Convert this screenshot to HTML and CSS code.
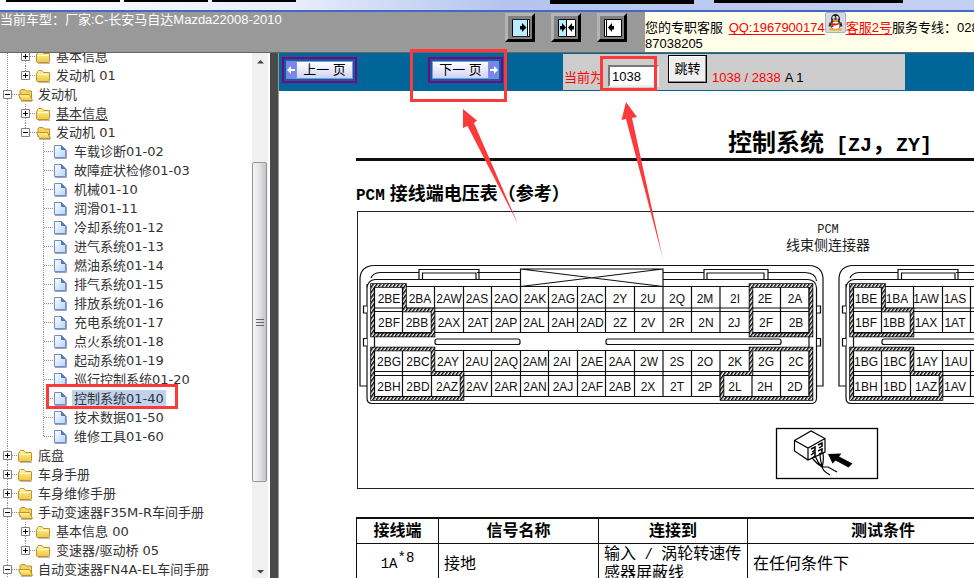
FILE: index.html
```html
<!DOCTYPE html>
<html lang="zh-CN">
<head>
<meta charset="utf-8">
<title>车型手册</title>
<link rel="stylesheet" href="styles.css">
</head>
<body>
<svg class="defs" aria-hidden="true">
  <defs>
    <linearGradient id="gold" x1="0" y1="0" x2="0" y2="1"><stop offset="0" stop-color="#fff6a8"/><stop offset="1" stop-color="#efc83c"/></linearGradient>
    <linearGradient id="paper" x1="0" y1="0" x2="1" y2="1"><stop offset="0" stop-color="#fff"/><stop offset="1" stop-color="#b5d4ff"/></linearGradient>
    <symbol id="closed" viewBox="0 0 15 14">
      <path d="M1 4.5 1.5 2.5 2.5 1.5H6L7.500 3.500H13Q13.500 3.500 13.500 4V11.500Q13.500 12.500 12.500 12.500H1.500Q.5 12.500.5 11.500V4.500Z" fill="url(#gold)" stroke="#c0922c"/>
      <path d="M1.500 5.500H12.500" stroke="#fffbd0"/><path d="M2 13.500H14" stroke="#bbb"/>
    </symbol>
    <symbol id="open" viewBox="0 0 15 14">
      <path d="M2 11V3L3 1.500H7L8.500 3H13.500V11" fill="#f3d560" stroke="#c0922c"/>
      <path d="M.5 6.500H11.500L14.500 12.500H3.500Z" fill="url(#gold)" stroke="#c0922c"/><path d="M3 13.500H14" stroke="#bbb"/>
    </symbol>
    <symbol id="doc" viewBox="0 0 15 14">
      <path d="M.5.5H7.500L11.500 4.500V12.500H.5Z" fill="url(#paper)" stroke="#6f8fca"/>
      <path d="M7.500.5V4.500H11.500" fill="#5a80c8" stroke="#5570b0"/><path d="M1 13.500H12.500V5" fill="none" stroke="#a0a0b8"/>
    </symbol>
    <symbol id="plus" viewBox="0 0 9 9"><path d="M.5.5H8.500V8.500H.5Z" fill="#fff" stroke="#808080"/><path d="M2 4.500H7M4.500 2V7" stroke="#000"/></symbol>
    <symbol id="minus" viewBox="0 0 9 9"><path d="M.5.5H8.500V8.500H.5Z" fill="#fff" stroke="#808080"/><path d="M2 4.500H7" stroke="#000"/></symbol>
    <pattern id="hatch" width="3" height="3" patternUnits="userSpaceOnUse" patternTransform="rotate(35)"><rect width="3" height="3" fill="#fff"/><rect width="1.500" height="3" fill="#000"/></pattern>
  </defs>
</svg>

<div class="strip"><span class="tab t1"></span><span class="tab t2"></span><span class="tab t3"></span><span class="tab t4"></span><span class="tab t5"></span></div>

<header class="header">
  <div class="model">当前车型：厂家:C-长安马自达Mazda22008-2010</div>
  <div class="frames">
    <button class="frame-btn" aria-label="展开左栏"><svg width="18" height="18" viewBox="0 0 18 18"><path d="M0 0H18V18H0Z" fill="#fff"/><path d="M.5.5H15.500V17.500H.5Z" fill="#b8ecff" stroke="#000"/><path d="M17.500 0V18M0 .5H18M0 17.500H18" stroke="#222"/><path d="M8 7H10V4L14.500 8.500 10 13V10.500H8Z"/></svg></button>
    <button class="frame-btn" aria-label="双栏"><svg width="18" height="18" viewBox="0 0 18 18"><path d="M.5.5H8.500V17.500H.5Z" fill="#b8ecff" stroke="#000"/><path d="M8.500.5H17.500V17.500H8.500Z" fill="#fff" stroke="#000"/><path d="M2 7H4V4L8 8.500 4 13V10.500H2ZM16 7H14V4L10 8.500 14 13V10.500H16Z"/></svg></button>
    <button class="frame-btn" aria-label="收起左栏"><svg width="18" height="18" viewBox="0 0 18 18"><path d="M.5.5H17.500V17.500H.5Z" fill="#fff" stroke="#000"/><path d="M2.500.5V17.500" stroke="#000"/><path d="M10 7H8V4L4 8.500 8 13V10.500H10Z"/></svg></button>
  </div>
  <div class="contact">
    您的专职客服 <a class="first" href="#">QQ:1967900174</a><svg class="qq" viewBox="0 0 21 21"><rect x=".5" y=".5" width="20" height="20" rx="1.500" fill="#d5dbe6" stroke="#aab2c2"/><path d="M5 10C3.500 12 3.500 14 4 15L6 13ZM16 10C17.500 12 17.500 14 17 15L15 13Z" fill="#333"/><ellipse cx="10.500" cy="12.500" rx="5.500" ry="5" fill="#222"/><ellipse cx="10.500" cy="7" rx="4.500" ry="5" fill="#222"/><ellipse cx="10.500" cy="13.500" rx="4" ry="4" fill="#fff"/><ellipse cx="8.800" cy="5.800" rx="1.400" ry="1.900" fill="#fff"/><ellipse cx="12.200" cy="5.800" rx="1.400" ry="1.900" fill="#fff"/><circle cx="9.200" cy="6.200" r=".6"/><circle cx="11.800" cy="6.200" r=".6"/><ellipse cx="10.500" cy="8.800" rx="3" ry="1" fill="#f9a51a"/><path d="M5.500 10Q10.500 13 15.500 10V11.500Q10.500 14.500 8.500 13V15H6.500V12.500L5.500 12Z" fill="#e02020"/><path d="M5 17.500H9.500M11.500 17.500H16" stroke="#f9a51a" stroke-width="2" stroke-linecap="round"/></svg><a href="#">客服2号</a>服务专线：028-<br>87038205
  </div>
</header>

<div class="main">
  <nav class="sidebar">
    <div class="tree-wrap">
      <ul class="tree">
        <li>
          <ul>
            <li><div class="row"><svg class="exp"><use href="#plus"/></svg><svg class="ico"><use href="#closed"/></svg><a href="#">基本信息</a></div></li>
            <li><div class="row"><svg class="exp"><use href="#plus"/></svg><svg class="ico"><use href="#closed"/></svg><a href="#">发动机 01</a></div></li>
          </ul>
        </li>
        <li><div class="row"><svg class="exp"><use href="#minus"/></svg><svg class="ico"><use href="#open"/></svg><a href="#">发动机</a></div>
          <ul>
            <li><div class="row"><svg class="exp"><use href="#plus"/></svg><svg class="ico"><use href="#closed"/></svg><a class="hover" href="#">基本信息</a></div></li>
            <li><div class="row"><svg class="exp"><use href="#minus"/></svg><svg class="ico"><use href="#open"/></svg><a href="#">发动机 01</a></div>
              <ul>
                <li><div class="row leaf"><svg class="ico"><use href="#doc"/></svg><a href="#">车载诊断01-02</a></div></li>
                <li><div class="row leaf"><svg class="ico"><use href="#doc"/></svg><a href="#">故障症状检修01-03</a></div></li>
                <li><div class="row leaf"><svg class="ico"><use href="#doc"/></svg><a href="#">机械01-10</a></div></li>
                <li><div class="row leaf"><svg class="ico"><use href="#doc"/></svg><a href="#">润滑01-11</a></div></li>
                <li><div class="row leaf"><svg class="ico"><use href="#doc"/></svg><a href="#">冷却系统01-12</a></div></li>
                <li><div class="row leaf"><svg class="ico"><use href="#doc"/></svg><a href="#">进气系统01-13</a></div></li>
                <li><div class="row leaf"><svg class="ico"><use href="#doc"/></svg><a href="#">燃油系统01-14</a></div></li>
                <li><div class="row leaf"><svg class="ico"><use href="#doc"/></svg><a href="#">排气系统01-15</a></div></li>
                <li><div class="row leaf"><svg class="ico"><use href="#doc"/></svg><a href="#">排放系统01-16</a></div></li>
                <li><div class="row leaf"><svg class="ico"><use href="#doc"/></svg><a href="#">充电系统01-17</a></div></li>
                <li><div class="row leaf"><svg class="ico"><use href="#doc"/></svg><a href="#">点火系统01-18</a></div></li>
                <li><div class="row leaf"><svg class="ico"><use href="#doc"/></svg><a href="#">起动系统01-19</a></div></li>
                <li><div class="row leaf"><svg class="ico"><use href="#doc"/></svg><a href="#">巡行控制系统01-20</a></div></li>
                <li><div class="row leaf"><svg class="ico"><use href="#doc"/></svg><a class="current" href="#">控制系统01-40</a></div></li>
                <li><div class="row leaf"><svg class="ico"><use href="#doc"/></svg><a href="#">技术数据01-50</a></div></li>
                <li><div class="row leaf"><svg class="ico"><use href="#doc"/></svg><a href="#">维修工具01-60</a></div></li>
              </ul>
            </li>
          </ul>
        </li>
        <li><div class="row"><svg class="exp"><use href="#plus"/></svg><svg class="ico"><use href="#closed"/></svg><a href="#">底盘</a></div></li>
        <li><div class="row"><svg class="exp"><use href="#plus"/></svg><svg class="ico"><use href="#closed"/></svg><a href="#">车身手册</a></div></li>
        <li><div class="row"><svg class="exp"><use href="#plus"/></svg><svg class="ico"><use href="#closed"/></svg><a href="#">车身维修手册</a></div></li>
        <li><div class="row"><svg class="exp"><use href="#minus"/></svg><svg class="ico"><use href="#open"/></svg><a href="#">手动变速器F35M-R车间手册</a></div>
          <ul>
            <li><div class="row"><svg class="exp"><use href="#plus"/></svg><svg class="ico"><use href="#closed"/></svg><a href="#">基本信息 00</a></div></li>
            <li><div class="row"><svg class="exp"><use href="#plus"/></svg><svg class="ico"><use href="#closed"/></svg><a href="#">变速器/驱动桥 05</a></div></li>
          </ul>
        </li>
        <li><div class="row"><svg class="exp"><use href="#minus"/></svg><svg class="ico"><use href="#open"/></svg><a href="#">自动变速器FN4A-EL车间手册</a></div></li>
      </ul>
    </div>
    <div class="scrollbar">
      <svg class="arrow" viewBox="0 0 16 17"><path d="M5 10.500 8.500 7 12 10.500Z" fill="#444"/></svg>
      <div class="thumb"><span class="grip"></span></div>
      <svg class="arrow" viewBox="0 0 16 17"><path d="M5 9 8.500 12.500 12 9Z" fill="#444"/></svg>
    </div>
  </nav>
  <div class="divider"></div>
  <main class="content">
    <div class="toolbar">
      <button class="page-btn prev"><svg width="10" height="16" viewBox="0 0 10 16"><path d="M1 8 5 4V7H9V9H5V12Z" fill="#fff"/></svg><span>上一 页</span></button>
      <button class="page-btn next"><span>下一 页</span><svg width="10" height="16" viewBox="0 0 10 16"><path d="M9 8 5 4V7H1V9H5V12Z" fill="#fff"/></svg></button>
      <form class="jump">
        <label for="page">当前为</label>
        <input id="page" type="text" value="1038">
        <button type="button">跳转</button>
        <span class="count">1038 / 2838</span><span>A 1</span>
      </form>
    </div>
    <article class="page">
      <h1>控制系统<span class="mono"> [ZJ</span>，<span class="mono">ZY]</span></h1>
      <h2><span class="mono">PCM</span> 接线端电压表（参考）</h2>
      <div class="figure">
        <svg width="616" height="276" viewBox="358 212 616 276">
          <g class="caption"><text class="mono" x="828" y="233">PCM</text><text x="828" y="250">线束侧连接器</text></g>
          <defs>
            <g id="shell" fill="none" stroke="#111" stroke-width="1.200">
              <path d="M367 386H360V278Q361 266 374 265.500H809Q822 266 823 278V386H817"/>
              <path d="M371 278Q373 273 380 272.500H419M477 272.500H520M663 272.500H704M768 272.500H805Q816 273 816.500 281"/>
              <path d="M367 306V288Q368 280 375 279.500H520M663 279.500H808Q816 280 816.500 288V399Q816 403.500 811 403.500H372Q367 403.500 367 398V284"/>
              <path d="M419 279.500V269.500H479V279.500M422.500 279.500V273H476V279.500M704 279.500V269.500H768V279.500M707 279.500V273H764V279.500"/>
              <path d="M520.500 286.500V269H663V286.500M520.500 269 663 286.500M520.500 286.500 663 269"/>
              <path fill="#fff" d="M367 306H363.500V313H367M367 338.500H363.500V346H367M817 306H820.500V313H817M817 338.500H820.500V346H817"/>
              <path d="M374.500 286.500H809M374.500 308H809M374.500 311.500H809M374.500 332.500H809M374.500 350.500H809M374.500 371.500H809M374.500 375.500H809M374.500 396.500H809M374.500 286.500V396.500M809 286.500V396.500"/>
              <path d="M402.500 286.500V332.500M434.500 286.500V332.500M463.500 286.500V332.500M491.500 286.500V332.500M520.500 286.500V332.500M548.500 286.500V332.500M577.500 286.500V332.500M605.500 286.500V332.500M634.500 286.500V332.500M663 286.500V332.500M691.500 286.500V332.500M720 286.500V332.500M751.500 286.500V332.500M780.500 286.500V332.500"/>
              <path d="M402.500 350.500V396.500M431.500 350.500V396.500M463.500 350.500V396.500M491.500 350.500V396.500M520.500 350.500V396.500M548.500 350.500V396.500M577.500 350.500V396.500M605.500 350.500V396.500M634.500 350.500V396.500M663 350.500V396.500M691.500 350.500V396.500M720 350.500V396.500M752 350.500V396.500M780.500 350.500V396.500"/>
            </g>
            <path id="zones" d="M372.500 285.500H404.500V310H433V335H372.500ZM372.500 349H433V373.500H462V398.500H372.500ZM751 285.500H811V335H751ZM751 349H811V398.500H722V373.500H751Z"/>
            <g id="zoned" fill="none"><use href="#zones" stroke="#000" stroke-width="4.500"/><use href="#zones" stroke="url(#hatch)" stroke-width="2.800"/></g>
          </defs>
          <use href="#shell"/><use href="#zoned"/>
          <use href="#shell" x="479"/><use href="#zoned" x="479"/>
          <g fill="#fff" stroke="#111" stroke-width="1.200"><rect x="435" y="339" width="85" height="5.500" rx="2"/><rect x="606" y="339" width="175" height="5.500" rx="2"/><rect x="882" y="339" width="120" height="5.500" rx="2"/></g>
          <g class="pins">
            <text y="303"><tspan x="389">2BE</tspan><tspan x="420">2BA</tspan><tspan x="449">2AW</tspan><tspan x="477">2AS</tspan><tspan x="506">2AO</tspan><tspan x="535">2AK</tspan><tspan x="563">2AG</tspan><tspan x="592">2AC</tspan><tspan x="620">2Y</tspan><tspan x="648">2U</tspan><tspan x="677">2Q</tspan><tspan x="705">2M</tspan><tspan x="735">2I</tspan><tspan x="765">2E</tspan><tspan x="795">2A</tspan><tspan x="866">1BE</tspan><tspan x="897">1BA</tspan><tspan x="926">1AW</tspan><tspan x="955">1AS</tspan></text>
            <text y="327"><tspan x="389">2BF</tspan><tspan x="417">2BB</tspan><tspan x="449">2AX</tspan><tspan x="478">2AT</tspan><tspan x="506">2AP</tspan><tspan x="534">2AL</tspan><tspan x="563">2AH</tspan><tspan x="592">2AD</tspan><tspan x="620">2Z</tspan><tspan x="648">2V</tspan><tspan x="677">2R</tspan><tspan x="706">2N</tspan><tspan x="734">2J</tspan><tspan x="766">2F</tspan><tspan x="796">2B</tspan><tspan x="866">1BF</tspan><tspan x="894">1BB</tspan><tspan x="926">1AX</tspan><tspan x="955">1AT</tspan></text>
            <text y="366"><tspan x="389">2BG</tspan><tspan x="418">2BC</tspan><tspan x="448">2AY</tspan><tspan x="477">2AU</tspan><tspan x="506">2AQ</tspan><tspan x="535">2AM</tspan><tspan x="562">2AI</tspan><tspan x="592">2AE</tspan><tspan x="620">2AA</tspan><tspan x="649">2W</tspan><tspan x="677">2S</tspan><tspan x="705">2O</tspan><tspan x="735">2K</tspan><tspan x="766">2G</tspan><tspan x="796">2C</tspan><tspan x="866">1BG</tspan><tspan x="895">1BC</tspan><tspan x="927">1AY</tspan><tspan x="956">1AU</tspan></text>
            <text y="391"><tspan x="389">2BH</tspan><tspan x="418">2BD</tspan><tspan x="447">2AZ</tspan><tspan x="477">2AV</tspan><tspan x="506">2AR</tspan><tspan x="535">2AN</tspan><tspan x="563">2AJ</tspan><tspan x="592">2AF</tspan><tspan x="620">2AB</tspan><tspan x="648">2X</tspan><tspan x="677">2T</tspan><tspan x="705">2P</tspan><tspan x="735">2L</tspan><tspan x="765">2H</tspan><tspan x="795">2D</tspan><tspan x="866">1BH</tspan><tspan x="895">1BD</tspan><tspan x="926">1AZ</tspan><tspan x="955">1AV</tspan></text>
          </g>
          <rect x="776.500" y="428.500" width="101" height="50" fill="#fff" stroke="#000" stroke-width="1.300"/>
          <g fill="none" stroke="#000" stroke-width="1.200">
            <path d="M794.500 440.500 811 431 825 438.500V452L808 460 794.500 451ZM794.500 440.500 808 448 825 438.500M808 448V460"/>
            <path d="M811 449 815 447V450L812 452M818 445 822 443V446L819 448M811 455 815 452V456L812 458M818 451 822 449V453L819 454" stroke-width="1.500"/>
            <path d="M812 458Q817 464 822 467M815 456Q818 463 822 467M820 453Q820 462 823 467M823 453Q824 462 822 467M821 464Q822 471 830 475M822 467 828 467 837 472"/>
          </g>
          <path d="M828 454 841.500 453.500 839 456.500 852.500 463.500 848.500 467.500 835.500 460.500 832.500 463.500Z"/>
        </svg>
      </div>
      <table class="pins-table">
        <colgroup><col class="c1"><col class="c2"><col class="c3"><col class="c4"></colgroup>
        <thead><tr><th>接线端</th><th>信号名称</th><th>连接到</th><th>测试条件</th></tr></thead>
        <tbody><tr><td class="pin"><span class="mono">1A</span><sup class="mono">*8</sup></td><td>接地</td><td>输入<span class="mono"> / </span>涡轮转速传<br>感器屏蔽线</td><td>在任何条件下</td></tr></tbody>
      </table>
    </article>
  </main>
</div>

<svg class="notes" width="974" height="578" viewBox="0 0 974 578" aria-hidden="true">
  <g fill="none" stroke="#fb3b3b" stroke-width="3"><rect x="411.500" y="50.500" width="94" height="50"/><rect x="601.500" y="57.500" width="54" height="32"/><rect x="47.500" y="385.500" width="129" height="22"/></g>
  <path fill="#fb3b3b" d="M463 109 477 120.500 474 123 518 224 467.500 126 463 128ZM626 102 637 117 632 118 663 259 626 119 621.500 120Z"/>
</svg>
</body>
</html>
```

FILE: styles.css
```css
* { box-sizing: border-box; }

body {
  margin: 0;
  height: 100vh;
  display: flex;
  flex-direction: column;
  overflow: hidden;
  position: relative;
  background: #fff;
  color: #000;
  font: 13px/16px "Liberation Sans", "Noto Sans CJK SC", sans-serif;
}

button, input { font: inherit; color: inherit; }
.defs { position: absolute; width: 0; height: 0; }
.mono { font-family: "Liberation Mono", monospace; white-space: pre; }

/* browser strip */
.strip {
  flex: none;
  height: 12px;
  padding-left: 6px;
  display: flex;
  align-items: flex-start;
  background: linear-gradient(90deg, #fff, #e9edfb 30%, #b4c4ee 52%, #c4d0f2);
  border-bottom: 2px solid #4568c4;
}
.tab { height: 2px; background: #000; }
.t1 { width: 114px; margin-right: 4px; }
.t2 { width: 84px; margin-right: 4px; }
.t3 { width: 84px; margin-right: 254px; }
.t4 { width: 144px; height: 4px; margin-right: 20px; }
.t5 { width: 189px; height: 3px; }

/* header */
.header {
  flex: none;
  height: 41px;
  display: grid;
  grid-template-columns: 505px 140px 1fr;
  background: #999;
  border-bottom: 1px solid #666;
  overflow: hidden;
}
.model { color: #fff; white-space: nowrap; }
.frames { display: flex; gap: 16px; padding-top: 1px; align-items: flex-start; }
.frame-btn {
  width: 30px;
  height: 29px;
  padding: 2px 2px 1px 3px;
  background: #808080;
  border: 3px solid;
  border-color: #b4b4b4 #000 #000 #b4b4b4;
  line-height: 0;
}
.contact {
  background: #ffffea;
  margin-bottom: 1px;
  white-space: nowrap;
}
.contact a { color: #f00; text-underline-offset: 2px; }
.contact .first { margin-left: 2px; }
.qq { width: 21px; height: 21px; vertical-align: -1px; }

/* main frames */
.main { flex: 1; min-height: 0; display: flex; }
.sidebar { flex: none; width: 270px; display: flex; overflow: hidden; }
.tree-wrap { flex: 1; overflow: hidden; }
.divider { flex: none; width: 9px; background: #4a4a4a; border-right: 1px solid #999; }

.tree, .tree ul { list-style: none; margin: 0; padding: 0; }
.tree { margin-top: -6px; font-family: "DejaVu Sans", "Noto Sans CJK SC", sans-serif; color: #333; }
.tree ul { margin-left: 18px; }
.tree li {
  background: repeating-linear-gradient(#909090 0 1px, transparent 1px 2px) 7px 0 / 1px 100% no-repeat;
}
.tree ul > li:last-child { background-size: 1px 10px; }
.row {
  height: 19px;
  display: flex;
  align-items: center;
  padding-left: 3px;
  white-space: nowrap;
  background: repeating-linear-gradient(90deg, #909090 0 1px, transparent 1px 2px) 8px 9px / 10px 1px no-repeat;
}
.row.leaf { padding-left: 18px; }
.exp { width: 9px; height: 9px; margin-right: 6px; }
.ico { width: 15px; height: 14px; margin-right: 3px; }
.row a { color: inherit; text-decoration: none; padding: 0 2px; line-height: 18px; }
.row a.hover { text-decoration: underline; text-underline-offset: 2px; }
.row a.current { background: #c0d2ee; }

.scrollbar {
  flex: none;
  width: 18px;
  display: flex;
  flex-direction: column;
  background: #f0f0f0;
  border-right: 2px solid #fff;
}
.arrow { width: 16px; height: 17px; flex: none; }
.thumb {
  flex: 1;
  margin: 92px 1px 79px 0;
  border: 1px solid #979797;
  border-radius: 2px;
  background: linear-gradient(90deg, #f5f5f5, #e6e6e9 45%, #c2c2c6);
  display: flex;
  align-items: center;
  justify-content: center;
}
.grip { width: 8px; height: 7px; background: repeating-linear-gradient(#666 0 1px, transparent 1px 3px); }

/* viewer */
.content { flex: 1; min-width: 0; overflow: hidden; }
.toolbar {
  height: 38px;
  padding-left: 3px;
  display: grid;
  grid-template-columns: 146px 135px 342px;
  background: #069;
}
.page-btn {
  width: 75px;
  height: 26px;
  margin-top: 4px;
  padding: 2px;
  display: flex;
  border: 2px solid #800080;
  background: #069;
  line-height: 16px;
}
.page-btn span {
  flex: 1;
  height: 18px;
  border: 1px solid #8a8fe0;
  background: linear-gradient(#fff, #cfd3f6);
  white-space: nowrap;
}
.page-btn svg { height: 18px; background: #7b86ea; }
.jump {
  display: flex;
  align-items: flex-start;
  margin: 1px 0;
  padding-left: 1px;
  background: #ccc;
  white-space: nowrap;
}
.jump label { color: #f00; padding-top: 16px; width: 44px; }
.jump input {
  width: 51px;
  height: 22px;
  margin: 11px 9px 0 0;
  padding: 0 2px;
  border: 2px solid;
  border-color: #777 #eee #eee #777;
  border-radius: 0;
  background: #fff;
}
.jump button {
  width: 39px;
  height: 28px;
  margin: 1px 5px 0 0;
  padding: 0;
  border: 1px solid #000;
  box-shadow: inset -1px -1px #888, inset 1px 1px #fff;
  background: #efefef;
}
.jump span { padding-top: 16px; }
.jump .count { color: #f00; margin-right: 4px; }

.page { padding-left: 77px; }
.page h1 {
  margin: 0;
  height: 70px;
  padding: 40px 42px 0 0;
  border-bottom: 3px solid #111;
  font-size: 24px;
  line-height: 24px;
  font-weight: 700;
  text-align: right;
  white-space: nowrap;
}
.page h1 .mono { font-size: 20px; }
.page h2 {
  margin: 21px 0 0;
  height: 29px;
  font-size: 18px;
  line-height: 24px;
  font-weight: 700;
  white-space: nowrap;
}
.page h2 .mono { font-size: 16px; }
.figure {
  margin-left: 1px;
  height: 278px;
  border: 1px solid #222;
  border-right: 0;
  overflow: hidden;
}
.figure svg { display: block; }
.caption { font-size: 14px; text-anchor: middle; fill: #222; }
.caption .mono { font-size: 12px; }
.pins { font-size: 12px; text-anchor: middle; fill: #111; }

.pins-table {
  width: 663px;
  margin-top: 28px;
  border-collapse: collapse;
  table-layout: fixed;
  font-size: 16px;
  line-height: 18px;
}
.c1 { width: 82px; }
.c2 { width: 160px; }
.c3 { width: 149px; }
.pins-table th, .pins-table td { border: 1px solid #111; padding: 3px 5px; }
.pins-table thead th { border-top-width: 2px; }
.pins-table td { padding: 1px 5px; text-align: left; white-space: nowrap; }
.pins-table .pin { text-align: center; }
.pins-table .mono { font-size: 14px; }
.pins-table sup { line-height: 0; }

/* markup drawn over the page */
.notes { position: absolute; left: 0; top: 0; pointer-events: none; }
```
